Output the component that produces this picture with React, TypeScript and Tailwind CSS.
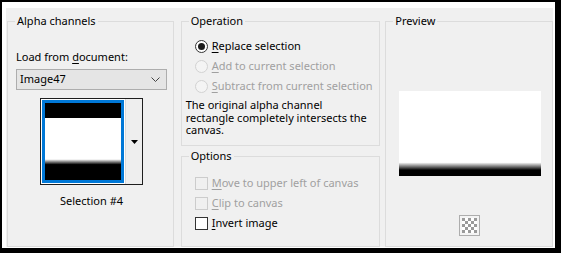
import React from 'react';

type GroupProps = { title: string; className?: string; children?: React.ReactNode };

const Group = ({ title, className = '', children }: GroupProps) => (
  <fieldset className={`border border-[#dcdcdc] min-w-0 ${className}`}>
    <legend className="ml-[7px] px-[2px] leading-[16px]">{title}</legend>
    {children}
  </fieldset>
);

const Key = ({ children }: { children: React.ReactNode }) => <span className="underline underline-offset-[2px]">{children}</span>;

const Radio = ({ checked, disabled, children }: { checked?: boolean; disabled?: boolean; children: React.ReactNode }) => (
  <div className="flex items-center h-[20px] ml-[13px] whitespace-nowrap">
    <span
      className={`w-[13px] h-[13px] shrink-0 rounded-full border flex items-center justify-center ${
        disabled ? 'border-[#d2d2d2] bg-[#f4f4f4]' : 'border-[#333333] bg-white'
      }`}
    >
      {checked && <span className="w-[7px] h-[7px] rounded-full bg-[#1b1b1b]" />}
    </span>
    <span className={`ml-[4px] ${disabled ? 'text-[#a0a0a0]' : ''}`}>{children}</span>
  </div>
);

const Check = ({ disabled, children }: { disabled?: boolean; children: React.ReactNode }) => (
  <div className="flex items-center h-[20px] ml-[13px] whitespace-nowrap">
    <span className={`w-[13px] h-[13px] shrink-0 border ${disabled ? 'border-[#cccccc]' : 'border-[#333333] bg-white'}`} />
    <span className={`ml-[4px] ${disabled ? 'text-[#a0a0a0]' : ''}`}>{children}</span>
  </div>
);

const Checker = () => (
  <svg width="21" height="21" viewBox="0 0 21 21" className="mx-auto block">
    <rect x="0.5" y="0.5" width="20" height="20" fill="#f4f4f4" stroke="#adadad" />
    <rect x="3" y="3" width="15" height="15" fill="#ffffff" />
    {[0, 1, 2, 3, 4].map((r) =>
      [0, 1, 2, 3, 4].map((c) =>
        (r + c) % 2 === 0 ? <rect key={`${r}-${c}`} x={3 + c * 3} y={3 + r * 3} width="3" height="3" fill="#9a9a9a" /> : null
      )
    )}
  </svg>
);

export default function App() {
  return (
    <div className="w-[561px] h-[253px] bg-white border-l-2 border-t-2 border-r-[6px] border-b-[5px] border-black pl-[4px] pt-[6px] pr-[2px] pb-[1px] font-['Noto_Sans',sans-serif] text-[11px] text-black">
      <div className="h-full bg-[#f0f0f0] flex pt-[5px] pl-[1px]">
        {/* left: alpha channels */}
        <Group title="Alpha channels" className="w-[167px]">
          <div className="ml-[8px] mt-[20px] leading-[16px]">
            Load from <Key>d</Key>ocument:
          </div>
          <div className="ml-[8px] mt-[4px] w-[151px] h-[21px] bg-[#e5e5e5] border border-[#adadad] flex items-center justify-between pl-[3px] pr-[6px]">
            <span>Image47</span>
            <svg width="9" height="5" viewBox="0 0 9 5">
              <path d="M0.5 0.5 L4.5 4.5 L8.5 0.5" fill="none" stroke="#444" strokeWidth="1" />
            </svg>
          </div>
          <div className="ml-[32px] mt-[8px] w-[103px] h-[87px] border border-[#1e1e1e] flex">
            <div className="w-[84px] bg-white p-[1px]">
              <div className="h-full border-[3px] border-[#0078d7] bg-[linear-gradient(to_bottom,#000_0,#000_15px,#fff_15px,#fff_73%,#000_80%,#000_100%)]" />
            </div>
            <div className="flex-1 bg-[#eeeeee] border-l border-[#dadada] flex items-center justify-center">
              <svg width="7" height="4" viewBox="0 0 7 4">
                <path d="M0 0 H7 L3.5 4 Z" fill="#000" />
              </svg>
            </div>
          </div>
          <div className="ml-[8px] mt-[8px] w-[151px] text-center leading-[16px]">Selection #4</div>
        </Group>

        {/* middle: operation + options */}
        <div className="ml-[7px] w-[200px] flex flex-col">
          <Group title="Operation" className="h-[133px]">
            <div className="mt-[7px]">
              <Radio checked>
                <Key>R</Key>eplace selection
              </Radio>
              <Radio disabled>
                <Key>A</Key>dd to current selection
              </Radio>
              <Radio disabled>
                <Key>S</Key>ubtract from current selection
              </Radio>
            </div>
            <p className="ml-[4px] mt-[3px] leading-[12.5px] whitespace-nowrap">
              The original alpha channel
              <br />
              rectangle completely intersects the
              <br />
              canvas.
            </p>
          </Group>
          <Group title="Options" className="mt-[2px] flex-1">
            <div className="mt-[9px]">
              <Check disabled>
                <Key>M</Key>ove to upper left of canvas
              </Check>
              <Check disabled>
                <Key>C</Key>lip to canvas
              </Check>
              <Check>
                <Key>I</Key>nvert image
              </Check>
            </div>
          </Group>
        </div>

        {/* right: preview */}
        <Group title="Preview" className="ml-[5px] w-[168px]">
          <div className="ml-[13px] mt-[62px] w-[142px] h-[85px] bg-[linear-gradient(to_bottom,#fff_0,#fff_84%,#000_93%,#000_100%)]" />
          <div className="mt-[39px]">
            <Checker />
          </div>
        </Group>
      </div>
    </div>
  );
}
